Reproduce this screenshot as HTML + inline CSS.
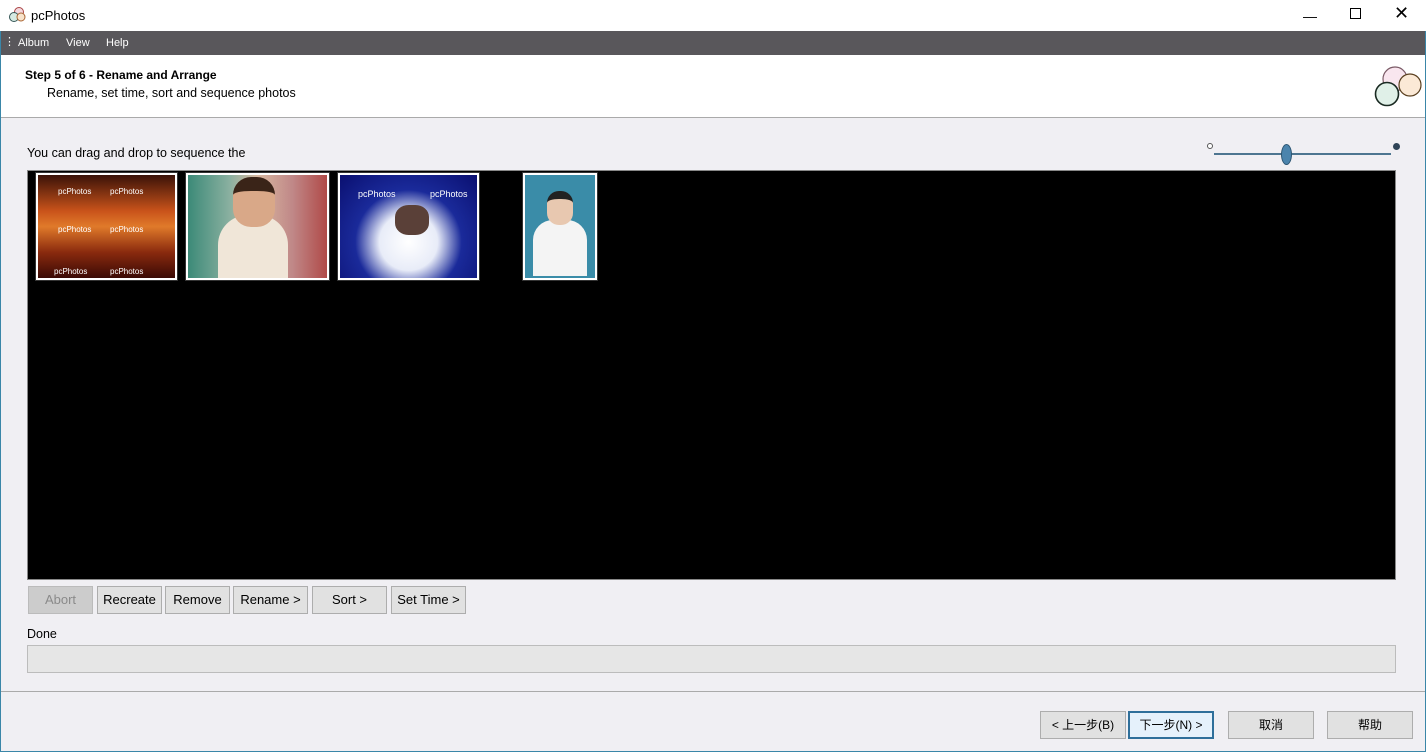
<!DOCTYPE html>
<html><head><style>
*{margin:0;padding:0;box-sizing:border-box}
body{width:1426px;height:752px;overflow:hidden;background:#f0eff3;font-family:"Liberation Sans","Noto Sans CJK SC",sans-serif;font-size:12px;color:#000;position:relative}
.abs{position:absolute}
.btn{position:absolute;background:#e1e1e1;border:1px solid #adadad;text-align:center;font-size:13px;line-height:26px;color:#000}
.th{position:absolute;border:2px solid #fff;outline:1px solid #333}
.wm{position:absolute;color:#fff;font-size:8px}
</style></head><body>
<div class="abs" style="left:0;top:0;width:1426px;height:31px;background:#fff"></div>
<svg class="abs" style="left:8px;top:7px" width="18" height="16"><circle cx="11" cy="5" r="4.5" fill="#f4d9df" stroke="#a44" /><circle cx="6" cy="10" r="4.5" fill="#d6ebe3" stroke="#355"/><circle cx="13" cy="10" r="4" fill="#f7e3cc" stroke="#a63"/></svg>
<div class="abs" style="left:31px;top:8px;font-size:13px">pcPhotos</div>
<div class="abs" style="left:1303px;top:8px;font-size:14px">&#x2014;</div>
<div class="abs" style="left:1350px;top:8px;width:11px;height:11px;border:1px solid #000"></div>
<div class="abs" style="left:1394px;top:3px;font-size:18px">&#x2715;</div>
<div class="abs" style="left:0;top:31px;width:1426px;height:24px;background:#59575b;color:#fff;font-size:11px">
<span class="abs" style="left:4px;top:4px">&#8942;</span><span class="abs" style="left:18px;top:6px">Album</span><span class="abs" style="left:66px;top:6px">View</span><span class="abs" style="left:106px;top:6px">Help</span></div>
<div class="abs" style="left:1px;top:55px;width:1424px;height:63px;background:#fff;border-bottom:1px solid #aaa"></div>
<div class="abs" style="left:25px;top:68px;font-weight:bold;font-size:12px">Step 5 of 6 - Rename and Arrange</div>
<div class="abs" style="left:47px;top:86px;font-size:12.5px">Rename, set time, sort and sequence photos</div>
<svg class="abs" style="left:1370px;top:64px" width="52" height="44"><circle cx="25" cy="15" r="12" fill="#f9e6ef" stroke="#7a5a66" stroke-width="1.2"/><circle cx="40" cy="21" r="11" fill="#fbe9d6" stroke="#5a4020" stroke-width="1.2"/><circle cx="17" cy="30" r="11.5" fill="#e0f0e8" stroke="#1a2a22" stroke-width="1.6"/></svg>
<div class="abs" style="left:27px;top:146px;font-size:12.5px">You can drag and drop to sequence the</div>
<div class="abs" style="left:1207px;top:143px;width:6px;height:6px;border:1px solid #555;border-radius:50%;background:#fff"></div>
<div class="abs" style="left:1214px;top:153px;width:177px;height:2px;background:#4d7590"></div>
<div class="abs" style="left:1281px;top:144px;width:11px;height:21px;border-radius:50%;background:#4b84ad;border:1px solid #2d5673"></div>
<div class="abs" style="left:1393px;top:143px;width:7px;height:7px;border-radius:50%;background:#2f4457"></div>
<div class="abs" style="left:27px;top:170px;width:1369px;height:410px;background:#000;border:1px solid #888"></div>
<div class="th" style="left:36px;top:173px;width:141px;height:107px;background:linear-gradient(180deg,#3a1208 0%,#c9531a 35%,#e07a2a 50%,#8a2a0e 75%,#3a0a05 100%)"><span class="wm" style="left:20px;top:12px">pcPhotos</span><span class="wm" style="left:72px;top:12px">pcPhotos</span><span class="wm" style="left:20px;top:50px">pcPhotos</span><span class="wm" style="left:72px;top:50px">pcPhotos</span><span class="wm" style="left:16px;top:92px">pcPhotos</span><span class="wm" style="left:72px;top:92px">pcPhotos</span></div>
<div class="th" style="left:186px;top:173px;width:143px;height:107px;background:linear-gradient(90deg,#3c8a78 0%,#8ab0a0 30%,#d8b8a0 50%,#c08888 75%,#b04a48 100%)"><div style="position:absolute;left:30px;top:40px;width:70px;height:63px;background:#f0e6d8;border-radius:30px 30px 0 0"></div><div style="position:absolute;left:45px;top:2px;width:42px;height:50px;background:#d9a888;border-radius:18px;border-top:14px solid #3a2418"></div></div>
<div class="th" style="left:338px;top:173px;width:141px;height:107px;background:radial-gradient(ellipse at 50% 65%,#fff 0%,#e8ecf8 30%,#1a2a9a 55%,#0a0f70 100%)"><div style="position:absolute;left:55px;top:30px;width:34px;height:30px;background:#5a4038;border-radius:40%"></div><span class="wm" style="left:18px;top:14px;font-size:9px">pcPhotos</span><span class="wm" style="left:90px;top:14px;font-size:9px">pcPhotos</span></div>
<div class="th" style="left:523px;top:173px;width:74px;height:107px;background:#3a8ca8"><div style="position:absolute;left:8px;top:45px;width:54px;height:56px;background:#f4f4f4;border-radius:20px 20px 0 0"></div><div style="position:absolute;left:22px;top:16px;width:26px;height:34px;background:#e8c8b0;border-radius:12px;border-top:8px solid #222"></div></div>
<div class="btn" style="left:28px;top:586px;width:65px;color:#8a8a8a;background:#ccc;border-color:#bbb">Abort</div>
<div class="btn" style="left:97px;top:586px;width:65px">Recreate</div>
<div class="btn" style="left:165px;top:586px;width:65px">Remove</div>
<div class="btn" style="left:233px;top:586px;width:75px">Rename &gt;</div>
<div class="btn" style="left:312px;top:586px;width:75px">Sort &gt;</div>
<div class="btn" style="left:391px;top:586px;width:75px">Set Time &gt;</div>
<div class="abs" style="left:27px;top:627px;font-size:12.5px">Done</div>
<div class="abs" style="left:27px;top:645px;width:1369px;height:28px;background:#e6e6e6;border:1px solid #bcbcbc"></div>
<div class="abs" style="left:1px;top:691px;width:1424px;height:1px;background:#aaa"></div>
<div class="btn" style="left:1040px;top:711px;width:86px;font-size:12px">&lt; 上一步(B)</div>
<div class="btn" style="left:1128px;top:711px;width:86px;font-size:12px;border:2px solid #2f6f9a;background:#e5f1fb;line-height:24px">下一步(N) &gt;</div>
<div class="btn" style="left:1228px;top:711px;width:86px;font-size:12px">取消</div>
<div class="btn" style="left:1327px;top:711px;width:86px;font-size:12px">帮助</div>
<div class="abs" style="left:0;top:31px;width:1px;height:721px;background:#3a86a8"></div>
<div class="abs" style="left:1425px;top:31px;width:1px;height:721px;background:#3a86a8"></div>
<div class="abs" style="left:0;top:751px;width:1426px;height:1px;background:#3a86a8"></div>
</body></html>
